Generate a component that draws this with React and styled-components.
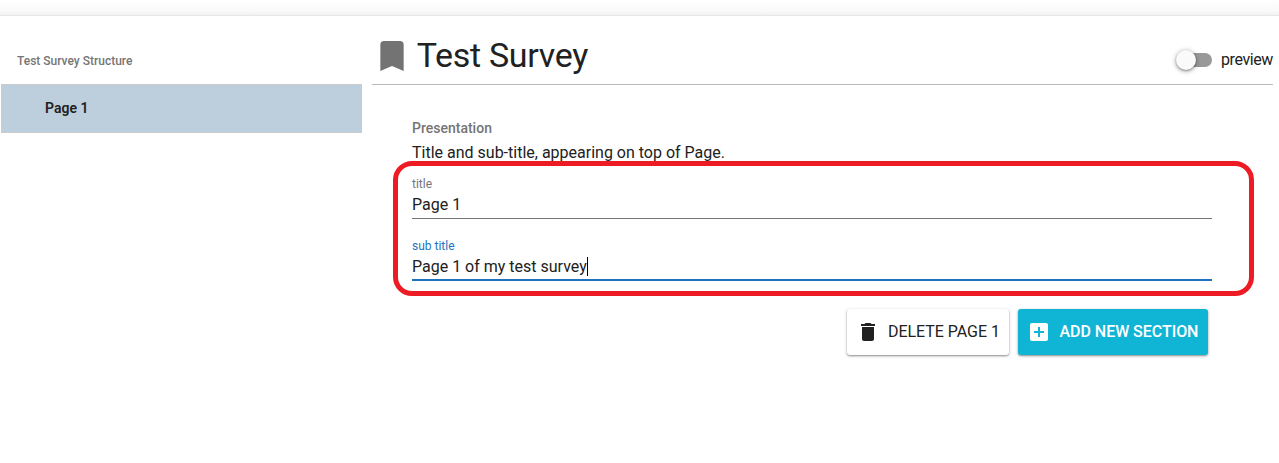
import React from 'react';
import styled, { createGlobalStyle } from 'styled-components';

const GlobalStyle = createGlobalStyle`
  * { box-sizing: border-box; }
  body {
    margin: 0;
    background: #fff;
    color: #212121;
    font-family: Roboto, sans-serif;
    font-size: 16px;
    overflow: hidden;
  }
`;

const Screen = styled.div`
  height: 463px;
  display: flex;
  flex-direction: column;
`;

const TopShade = styled.div`
  flex: none;
  height: 16px;
  background: linear-gradient(#fff 0, #fcfcfc 6px, #f9f9f9 11px, #f2f2f2 15px, #e6e6e6 15px);
`;

const Body = styled.div`
  flex: 1;
  display: flex;
  gap: 10px;
  padding-left: 1px;
`;

const Sidebar = styled.aside`
  width: 361px;
`;

const SidebarHeading = styled.div`
  height: 68px;
  padding: 35px 16px 0;
  font-size: 12px;
  font-weight: 500;
  line-height: 20px;
  color: #757575;
`;

const SidebarItem = styled.div`
  height: 49px;
  padding-left: 44px;
  border: solid #cbcbcb;
  border-width: 1px 0;
  background: #bdcedd;
  font-size: 14px;
  font-weight: 600;
  line-height: 46px;
`;

const Main = styled.main`
  width: 901px;
`;

const Header = styled.header`
  height: 69px;
  display: flex;
  align-items: flex-start;
  border-bottom: 1px solid #b9b9b9;
`;

const BookmarkIcon = styled.svg`
  width: 40px;
  height: 40px;
  margin: 20px 4.7px 0 0;
  fill: #737373;
`;

const Title = styled.h1`
  margin: 19px 0 0;
  font-size: 34px;
  font-weight: 400;
  line-height: 40px;
  letter-spacing: -0.3px;
`;

const PreviewToggle = styled.label`
  margin: 34px 0 0 auto;
  display: flex;
  align-items: center;
  line-height: 20px;
  gap: 9px;
`;

const ToggleText = styled.span`
  letter-spacing: -0.4px;
`;

const Track = styled.span`
  width: 34px;
  height: 14px;
  border-radius: 7px;
  background: #999;
  display: flex;
  align-items: center;
`;

const Knob = styled.span`
  flex: none;
  width: 20px;
  height: 20px;
  margin-left: -2px;
  border-radius: 50%;
  background: #fafafa;
  box-shadow: 0 1px 5px rgba(0, 0, 0, 0.4), 0 1px 2px rgba(0, 0, 0, 0.25);
`;

const Form = styled.section`
  width: 840px;
  padding: 33px 0 0 40px;
`;

const FormHeading = styled.div`
  font-size: 14px;
  font-weight: 500;
  line-height: 20px;
  color: #757575;
`;

const FormHint = styled.div`
  margin-top: 5px;
  line-height: 20px;
`;

const Fields = styled.div`
  position: relative;
  margin-top: 13px;
  height: 120px;
`;

const Highlight = styled.div`
  position: absolute;
  left: -19px;
  right: -42px;
  top: -15px;
  height: 135px;
  border: 5px solid #ed1c24;
  border-radius: 19px;
`;

const Field = styled.div`
  height: 62px;
`;

const FieldLabel = styled.div`
  height: 16px;
  font-size: 12px;
  line-height: 16px;
  color: ${(p) => (p.$active ? '#1e73be' : '#757575')};
`;

const FieldValue = styled.div`
  height: 27px;
  display: flex;
  line-height: 24px;
  padding-top: 1px;
  border-bottom: ${(p) => (p.$active ? '2px solid #1e73be' : '1px solid #757575')};
`;

const Caret = styled.span`
  width: 1px;
  height: 19px;
  margin-top: 2px;
  background: #000;
`;

const Actions = styled.div`
  display: flex;
  justify-content: flex-end;
  gap: 9px;
  padding: 13px 4px 0 0;
`;

const Button = styled.button`
  width: ${(p) => p.$width}px;
  height: 46px;
  padding: 0 0 0 9px;
  display: flex;
  align-items: center;
  gap: ${(p) => (p.$primary ? 8.5 : 8)}px;
  border: 0;
  border-radius: 3px;
  font: ${(p) => (p.$primary ? 500 : 400)} 16px/24px Roboto, sans-serif;
  letter-spacing: -0.04px;
  white-space: nowrap;
  color: ${(p) => (p.$primary ? '#fff' : '#212121')};
  background: ${(p) => (p.$primary ? '#10b5d6' : '#fff')};
  box-shadow: 0 1px 2px rgba(0, 0, 0, 0.38), 0 1px 4px rgba(0, 0, 0, 0.12);
`;

const ButtonIcon = styled.svg`
  flex: none;
  width: 24px;
  height: 24px;
  margin-top: -1px;
  fill: currentColor;
`;

export default function App() {
  return (
    <Screen>
      <GlobalStyle />
      <TopShade />
      <Body>
        <Sidebar>
          <SidebarHeading>Test Survey Structure</SidebarHeading>
          <SidebarItem>Page 1</SidebarItem>
        </Sidebar>
        <Main>
          <Header>
            <BookmarkIcon viewBox="0 0 24 24">
              <path d="M17 3H7c-1.1 0-1.99.9-1.99 2L5 21l7-3 7 3V5c0-1.1-.9-2-2-2z" />
            </BookmarkIcon>
            <Title>Test Survey</Title>
            <PreviewToggle>
              <Track>
                <Knob />
              </Track>
              <ToggleText>preview</ToggleText>
            </PreviewToggle>
          </Header>
          <Form>
            <FormHeading>Presentation</FormHeading>
            <FormHint>Title and sub-title, appearing on top of Page.</FormHint>
            <Fields>
              <Field>
                <FieldLabel>title</FieldLabel>
                <FieldValue>Page 1</FieldValue>
              </Field>
              <Field>
                <FieldLabel $active>sub title</FieldLabel>
                <FieldValue $active>
                  Page 1 of my test survey
                  <Caret />
                </FieldValue>
              </Field>
              <Highlight />
            </Fields>
            <Actions>
              <Button $width={162}>
                <ButtonIcon viewBox="0 0 24 24">
                  <path d="M6 19c0 1.1.9 2 2 2h8c1.1 0 2-.9 2-2V7H6v12zM19 4h-3.5l-1-1h-5l-1 1H5v2h14V4z" />
                </ButtonIcon>
                DELETE PAGE 1
              </Button>
              <Button $primary $width={190}>
                <ButtonIcon viewBox="0 0 24 24">
                  <path d="M19 3H5c-1.11 0-2 .9-2 2v14c0 1.1.89 2 2 2h14c1.1 0 2-.9 2-2V5c0-1.1-.9-2-2-2zm-2 10h-4v4h-2v-4H7v-2h4V7h2v4h4v2z" />
                </ButtonIcon>
                ADD NEW SECTION
              </Button>
            </Actions>
          </Form>
        </Main>
      </Body>
    </Screen>
  );
}
